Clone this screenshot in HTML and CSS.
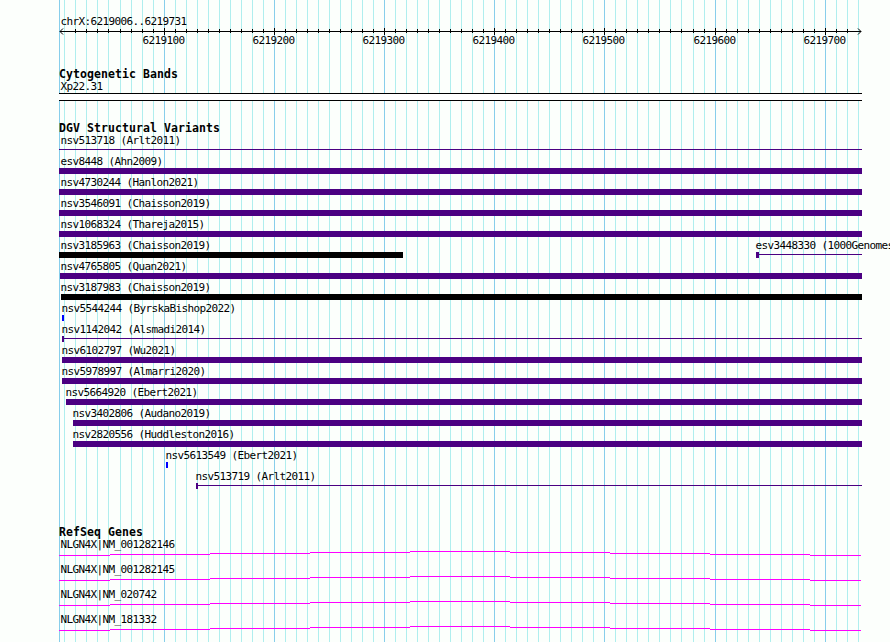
FILE: index.html
```html
<!DOCTYPE html>
<html lang="en">

<head>
    <meta charset="UTF-8">
    <title>chrX:6219006..6219731</title>
    <link rel="stylesheet" href="styles.css">
</head>

<body>
    <div class="browser">
        <svg class="grid" id="grid" width="890" height="642"></svg>

        <div class="panel">
            <div class="ruler">
                <div class="label">chrX:6219006..6219731</div>
                <svg class="axis" id="axis" width="803" height="20">
                    <path d="M1 3.5H802M1 3.5L4 .5M1 3.5L4 6.5M802 3.5L799 .5M802 3.5L799 6.5"></path>
                </svg>
            </div>

            <section class="track">
                <h2>Cytogenetic Bands</h2>
                <div class="label">Xp22.31</div>
                <div class="band"></div>
            </section>

            <section class="track">
                <h2>DGV Structural Variants</h2>
                <div id="variants"></div>
            </section>

            <section class="track genes">
                <h2>RefSeq Genes</h2>
                <div id="genes"></div>
            </section>
        </div>
    </div>

    <script>
        const LEFT = 59;
        const SVG_NS = 'http://www.w3.org/2000/svg';

        // each row holds [name, start, end, type]
        const variants = [
            [['nsv513718 (Arlt2011)', 59, 862, 'line']],
            [['esv8448 (Ahn2009)', 59, 862, 'bar']],
            [['nsv4730244 (Hanlon2021)', 59, 862, 'bar']],
            [['nsv3546091 (Chaisson2019)', 59, 862, 'bar']],
            [['nsv1068324 (Thareja2015)', 59, 862, 'bar']],
            [['nsv3185963 (Chaisson2019)', 59, 403, 'bar black'], ['esv3448330 (1000Genomes', 756, 862, 'line start wide']],
            [['nsv4765805 (Quan2021)', 60, 862, 'bar']],
            [['nsv3187983 (Chaisson2019)', 61, 862, 'bar black']],
            [['nsv5544244 (ByrskaBishop2022)', 62, 64, 'bar blue']],
            [['nsv1142042 (Alsmadi2014)', 62, 862, 'line start']],
            [['nsv6102797 (Wu2021)', 62, 862, 'bar']],
            [['nsv5978997 (Almarri2020)', 62, 862, 'bar']],
            [['nsv5664920 (Ebert2021)', 66, 862, 'bar']],
            [['nsv3402806 (Audano2019)', 73, 862, 'bar']],
            [['nsv2820556 (Huddleston2016)', 73, 862, 'bar']],
            [['nsv5613549 (Ebert2021)', 166, 168, 'bar blue']],
            [['nsv513719 (Arlt2011)', 196, 862, 'line start']]
        ];
        const genes = ['NLGN4X|NM_001282146', 'NLGN4X|NM_001282145', 'NLGN4X|NM_020742', 'NLGN4X|NM_181332'];

        function addSvg(parent, tag, attrs, text) {
            const el = document.createElementNS(SVG_NS, tag);
            for (const name in attrs) {
                el.setAttribute(name, attrs[name]);
            }
            if (text) {
                el.textContent = text;
            }
            parent.appendChild(el);
        }

        // Grid lines and ruler ticks, one every 10 bases
        const grid = document.getElementById('grid');
        const axis = document.getElementById('axis');
        addSvg(grid, 'rect', { class: 'major', x: LEFT, y: 0, width: 1, height: 642 });
        for (let k = 0; k <= 72; k++) {
            const x = Math.floor(64.91 + 11.0192 * k);
            const major = k % 10 === 9;
            addSvg(grid, 'rect', { class: major ? 'major' : 'minor', x: x, y: 0, width: 1, height: 642 });
            if (k > 0 && k < 72) {
                addSvg(axis, 'rect', { x: x - LEFT, y: major ? 0 : 1, width: 1, height: major ? 7 : 4 });
            }
            if (major) {
                addSvg(axis, 'text', { x: x - LEFT - 21.5, y: 16 }, String(6219010 + k * 10));
            }
        }

        // Structural variants
        document.getElementById('variants').innerHTML = variants.map(row =>
            '<div class="row">' + row.map(([name, start, end, type]) => {
                const text = Math.max(start - 1, LEFT + 1) - LEFT;
                return `<div class="feature">
                    <div class="label" style="margin-left: ${text - 1}px">${name}</div>
                    <div class="glyph ${type}" style="margin-left: ${start - LEFT}px; width: ${end - start}px"></div>
                </div>`;
            }).join('') + '</div>').join('');

        // Introns
        document.getElementById('genes').innerHTML = genes.map(name =>
            `<div class="gene">
                <div class="label">${name}</div>
                <svg class="intron" width="802" height="5">
                    <path d="M0 4.5H51M51 3.5H151M151 2.5H251M251 1.5H351M351 .5H451M451 1.5H551M551 2.5H651M651 3.5H751M751 4.5H802"></path>
                </svg>
            </div>`).join('');
    </script>
</body>

</html>
```
FILE: styles.css
```css
body {
    margin: 0;
    background-color: #fcfffc;
    color: #000;
    font-family: 'DejaVu Sans Mono', monospace;
    font-size: 11px;
    overflow: hidden;
}

.browser {
    position: relative;
    width: 890px;
    height: 642px;
    overflow: hidden;
}

.grid {
    position: absolute;
    top: 0;
    left: 0;
    shape-rendering: crispEdges;
}

.grid .major {
    fill: #87ceeb;
}

.grid .minor {
    fill: #afeeee;
}

.panel {
    position: relative;
    padding: 15px 0 0 59px;
}

.label {
    height: 13px;
    padding-left: 1.5px;
    line-height: 13px;
    letter-spacing: -0.62px;
    white-space: nowrap;
}

.ruler {
    height: 53px;
}

.axis {
    display: block;
    overflow: visible;
}

.axis path {
    fill: none;
    stroke: #000;
}

.axis rect {
    shape-rendering: crispEdges;
}

.axis text {
    letter-spacing: -0.62px;
}

.track {
    margin-bottom: 21px;
}

.genes {
    margin-top: 35px;
}

h2 {
    margin: 0;
    height: 12px;
    font-size: 11.5px;
    line-height: 12px;
    letter-spacing: 0.08px;
    white-space: nowrap;
}

.band {
    box-sizing: border-box;
    width: 803px;
    height: 8px;
    border: solid #000;
    border-width: 1px 0;
    background-color: #fff;
}

.row {
    display: grid;
    height: 21px;
}

.feature {
    grid-area: 1 / 1;
    min-width: 0;
}

.glyph {
    height: 6px;
}

.bar {
    background-color: #4b0082;
}

.black {
    background-color: #000;
}

.blue {
    background-color: #00f;
}

.line {
    background: linear-gradient(#4b0082, #4b0082) 0 2px / 100% 1px no-repeat;
}

.start {
    box-sizing: border-box;
    border-left: 2px solid #4b0082;
}

.wide {
    border-left-width: 3px;
}

.gene {
    height: 25px;
}

.intron {
    display: block;
}

.intron path {
    fill: none;
    stroke: #f0f;
    shape-rendering: crispEdges;
}
```
